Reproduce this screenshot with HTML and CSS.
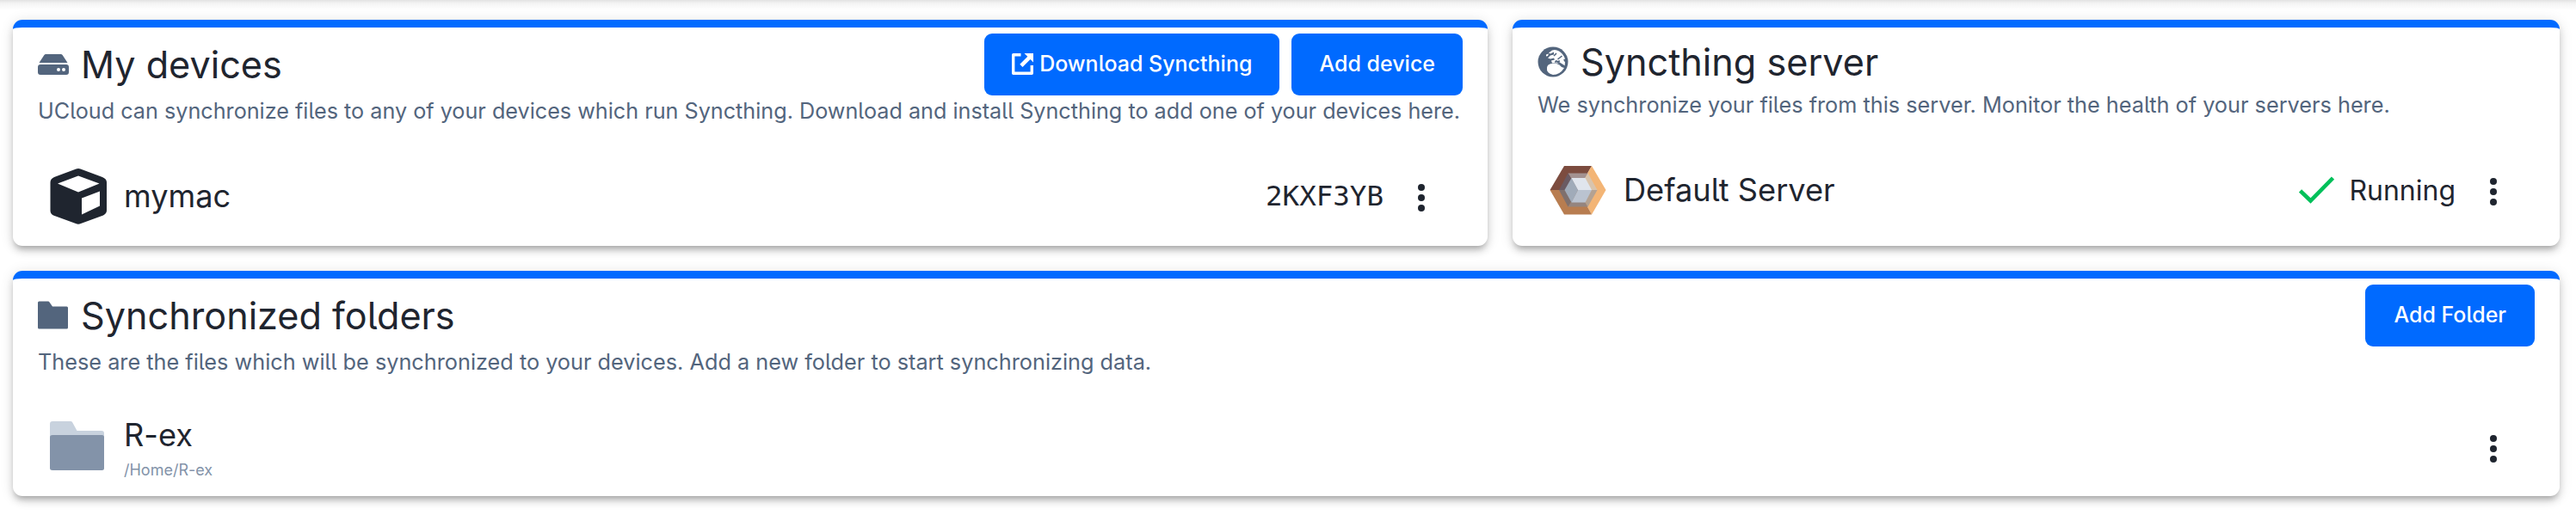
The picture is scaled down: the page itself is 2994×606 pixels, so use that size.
FILE: index.html
```
<!DOCTYPE html>
<html lang="en">
<head>
<meta charset="utf-8">
<title>Syncthing</title>
<link rel="stylesheet" href="styles.css">
</head>
<body>
<main class="page">
  <section class="card devices">
    <header class="head">
      <svg class="head-icon" viewBox="0 0 36 36"><path fill="#53657d" d="M9.500 6h17q1.500 0 2.300 1.300L34.500 16h-33L7.200 7.300Q8 6 9.500 6zM3 18h30q3 0 3 3v6q0 3-3 3H3q-3 0-3-3v-6q0-3 3-3z"/><circle cx="24" cy="24" r="2" fill="#fff"/><circle cx="30" cy="24" r="2" fill="#fff"/></svg>
      <h2 class="title">My devices</h2>
      <div class="actions">
        <button class="btn"><svg class="btn-icon" viewBox="0 0 25 25"><path d="M10.500 1.700H1.700v21.600h21.600V14" fill="none" stroke="#fff" stroke-width="3.400" stroke-linejoin="round"/><path d="M14.500 0H25v10.500l-3.500-3.500-9 9-3.200-3.200 9-9z" fill="#fff"/></svg>Download Syncthing</button>
        <button class="btn">Add device</button>
      </div>
    </header>
    <p class="desc">UCloud can synchronize files to any of your devices which run Syncthing. Download and install Syncthing to add one of your devices here.</p>
    <div class="row">
      <svg class="row-icon" viewBox="0 0 66 66"><path fill="#1f252f" fill-rule="evenodd" d="M30.500 1.500q2.500-1 5 0L61 11q5 2 5 6v33q0 3-4 5.500L36 65q-3 1.500-6 0L4 55.500Q.500 53.500.500 50V17q0-4 4.500-6zM33 9.500 9 18.500 33 28.500 57.500 18.500zM37 35.500V54.500L58 44.500V27.500z"/></svg>
      <span class="name">mymac</span>
      <span class="code">2KXF3YB</span>
      <svg class="dots" viewBox="0 0 8 32"><circle cx="4" cy="4" r="4"/><circle cx="4" cy="16" r="4"/><circle cx="4" cy="28" r="4"/></svg>
    </div>
  </section>
  <section class="card server">
    <header class="head">
      <svg class="head-icon" viewBox="0 0 36 36"><circle cx="18" cy="18" r="17.500" fill="#53657d"/><path fill="#fff" d="M17 4.500q4-1.500 8 1 5 3 7 9l-2 1 2 3-.5 5-4.500-3-4-1-6 0-1-3 4-1-1-2-4 1-3-1 3-3 4-1 0-3-4 2-2-1zM10 9.500l3-1-1 2.500-2 .5zM11 25q0-4 5-5l6 0q4 1 6 4l3 1q-5 8-13 8-8-2-7-8z"/><path stroke="#53657d" stroke-width="1.600" fill="none" d="M19 11l3-3M23.500 15l5-4M21 16.500l11 7M20 18l6-1"/></svg>
      <h2 class="title">Syncthing server</h2>
    </header>
    <p class="desc">We synchronize your files from this server. Monitor the health of your servers here.</p>
    <div class="row">
      <svg class="row-icon" viewBox="0 0 66 66"><path fill="#7c4c3f" d="M.5 33 17 5h32L33 33z"/><path fill="#f3b576" d="M49 5 65.500 33 49 61.500 33 33z"/><path fill="#b87d50" d="M.5 33h32.500l16 28.500H17z"/><path fill="#a39291" d="M21.500 13.500h23L33 33z"/><path fill="#6a5a62" d="M21.500 13.500 33 33H11z"/><path fill="#d9c4ad" d="M44.500 13.500 55.500 33H33z"/><path fill="#b4a292" d="M55.500 33 44.500 52.500 33 33z"/><path fill="#94857f" d="M44.500 52.500h-23L33 33z"/><path fill="#7f706d" d="M21.500 52.500 11 33h22z"/><path fill="#a0abb9" d="M25.500 19 33 33l-7.500 14.500L17.500 33z"/><path fill="#e0e5ed" d="M25.500 19h16L49 33H33z"/><path fill="#bac3d0" d="M33 33h16l-7.500 14.500h-16z"/></svg>
      <span class="name">Default Server</span>
      <svg class="check" viewBox="0 0 41 32"><path d="M1.500 17 13.500 28.500 39.500 2" fill="none" stroke="#00c05a" stroke-width="4.600"/></svg>
      <span class="status">Running</span>
      <svg class="dots" viewBox="0 0 8 32"><circle cx="4" cy="4" r="4"/><circle cx="4" cy="16" r="4"/><circle cx="4" cy="28" r="4"/></svg>
    </div>
  </section>
  <section class="card folders">
    <header class="head">
      <svg class="head-icon" viewBox="0 0 36 36"><path fill="#53657d" d="M1.500 1.500H12q1 0 1.500 1l3.500 5h16.500q1.500 0 1.500 1.500V32q0 1.500-1.500 1.500H1.500Q0 33.500 0 32V3Q0 1.500 1.500 1.500z"/></svg>
      <h2 class="title">Synchronized folders</h2>
      <div class="actions"><button class="btn">Add Folder</button></div>
    </header>
    <p class="desc">These are the files which will be synchronized to your devices. Add a new folder to start synchronizing data.</p>
    <div class="row">
      <svg class="row-icon" viewBox="0 0 66 66"><path fill="#c8d2de" d="M3 3h21q1.500 0 2 1l5.500 10H60q3 0 3 3v10H0V6q0-3 3-3z"/><path fill="#8393a9" d="M3 19h57.500q2.500 0 2.500 2.500v36q0 2.500-2.500 2.500H3Q0 60 0 57.500v-36Q0 19 3 19z"/></svg>
      <div class="names"><span class="name">R-ex</span><span class="path">/Home/R-ex</span></div>
      <svg class="dots" viewBox="0 0 8 32"><circle cx="4" cy="4" r="4"/><circle cx="4" cy="16" r="4"/><circle cx="4" cy="28" r="4"/></svg>
    </div>
  </section>
</main>
</body>
</html>
```
FILE: styles.css
```
* { box-sizing: border-box; }
body {
  margin: 0;
  height: 606px;
  background: #fff linear-gradient(#e2e2e2, #f4f4f4 4px, #fff 12px) no-repeat;
  color: #1f252f;
  font-family: Inter, sans-serif;
  font-feature-settings: "cv05";
  overflow: hidden;
}
.page {
  display: grid;
  grid-template-columns: 1714px 1217px;
  grid-template-rows: 263px 262px;
  gap: 29px;
  padding: 23px 19px 0 15px;
}
.card {
  border-top: 9px solid #006aff;
  border-radius: 11px;
  background: #fff;
  box-shadow: 0 6px 6px -4px rgba(0, 0, 0, .2), 0 6px 8px rgba(0, 0, 0, .14), 0 2px 16px rgba(0, 0, 0, .12);
  padding: 7px 29px 0;
}
.folders { grid-column: 1 / -1; }
.head { display: flex; align-items: center; height: 72px; }
.head-icon { width: 36px; height: 36px; margin-right: 14px; flex: none; }
.title { margin: 0; font-size: 43.200px; font-weight: 400; line-height: 72px; white-space: nowrap; }
.actions { display: flex; gap: 14px; margin-left: auto; }
.btn {
  display: flex;
  align-items: center;
  height: 72px;
  padding: 0 32px 2px;
  border: 0;
  border-radius: 9px;
  background: #006aff;
  color: #fff;
  font: 500 25px Inter, sans-serif;
  font-feature-settings: "cv05";
  white-space: nowrap;
}
.btn-icon { width: 25px; height: 25px; margin-right: 7px; }
.desc { margin: 0; height: 36px; color: #53657d; font-size: 25.200px; line-height: 36px; white-space: nowrap; }
.server .desc, .folders .desc { font-size: 25.280px; }
.row { display: flex; align-items: center; height: 72px; margin-top: 45px; padding: 0 44px 0 14px; }
.row-icon { width: 66px; height: 66px; margin-right: 20px; flex: none; }
.name { font-size: 36.200px; line-height: 46px; }
.names { display: flex; flex-direction: column; }
.path { margin-top: 7px; font-size: 18px; line-height: 21px; color: #8393a9; }
.code { margin-left: auto; font: 32.500px "DejaVu Sans Mono", monospace; }
.status { font-size: 32px; }
.check { width: 41px; height: 32px; margin: 0 17px 0 auto; }
.dots { width: 8px; height: 32px; fill: #1f252f; margin: 4px 0 0 40px; }
.folders .dots { margin-left: auto; }
.folders .btn { padding: 0 33px 2px; }
.server .head { height: 65px; }
```
